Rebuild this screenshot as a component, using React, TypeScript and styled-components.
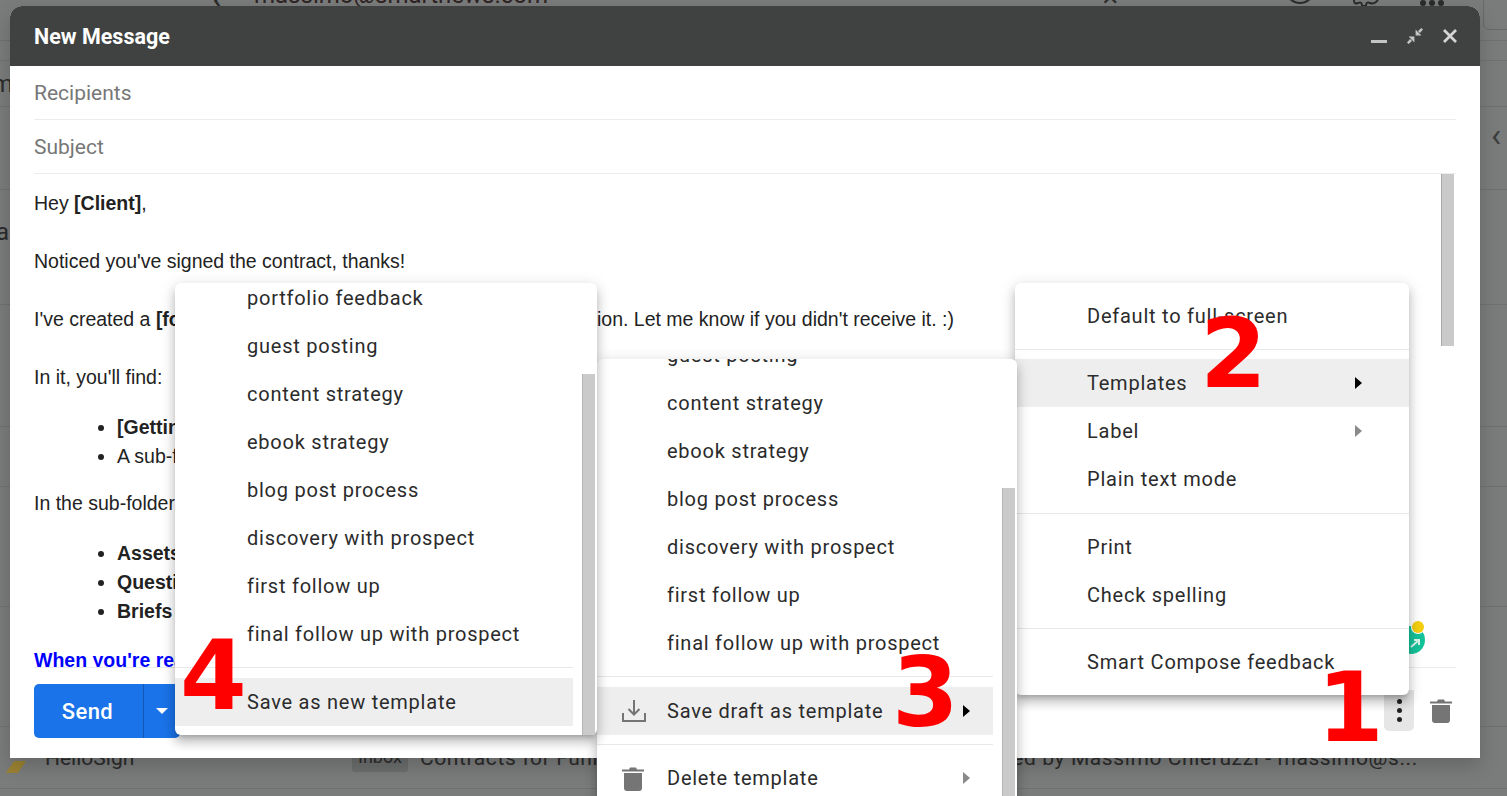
import React from "react";
import styled, { createGlobalStyle } from "styled-components";

const GlobalStyle = createGlobalStyle`
  html, body {
    margin: 0;
    padding: 0;
    height: 100%;
    overflow: hidden;
    background: #7a7c7b;
  }
  * {
    box-sizing: border-box;
  }
`;

const ROBOTO = `Roboto, "Liberation Sans", sans-serif`;
const ARIAL = `"Liberation Sans", Arial, sans-serif`;

function MinimizeIcon() {
    return (
        <svg width="16" height="4" viewBox="0 0 16 4">
            <rect x="0" y="0" width="16" height="3" fill="#c4c4c4" />
        </svg>
    );
}

function CompressIcon() {
    return (
        <svg width="16" height="16" viewBox="0 0 16 16" fill="#c4c4c4">
            <path d="M8.6 1.6 L14.4 7.4 H8.6 Z" />
            <path d="M11 3 L14.4 0 L16 1.6 L13 5 Z" />
            <path d="M7.4 14.4 L1.6 8.6 H7.4 Z" />
            <path d="M5 13 L1.6 16 L0 14.4 L3 11 Z" />
        </svg>
    );
}

function CloseIcon() {
    return (
        <svg width="14" height="14" viewBox="0 0 14 14" stroke="#d4d4d4" strokeWidth="2.8">
            <path d="M1 1 L13 13 M13 1 L1 13" />
        </svg>
    );
}

function TrashIcon() {
    return (
        <svg width="22" height="25" viewBox="0 0 22 25" fill="#757575">
            <path d="M0 3.5 H7 L8 1.5 H14 L15 3.5 H22 V5.5 H0 Z" />
            <path d="M2 7 H20 V22 Q20 25 17 25 H5 Q2 25 2 22 Z" />
        </svg>
    );
}

function SaveIcon() {
    return (
        <svg width="24" height="24" viewBox="0 0 24 24" fill="none" stroke="#757575" strokeWidth="2">
            <path d="M1 14 V22 H23 V14" />
            <path d="M12 1 V15 M6.5 10 L12 15.5 L17.5 10" />
        </svg>
    );
}

function MenuItem(props: { label: string; icon?: React.ReactNode; arrow?: "black" | "gray"; active?: boolean; gutter: number; arrowRight?: number }) {
    return (
        <Item $active={props.active} $gutter={props.gutter}>
            {props.icon && <ItemIcon>{props.icon}</ItemIcon>}
            {props.label}
            {props.arrow && <Arrow $right={props.arrowRight ?? 47} $color={props.arrow === "black" ? "#000" : "#8a8a8a"} />}
        </Item>
    );
}

const templatesA = [
    "portfolio feedback",
    "guest posting",
    "content strategy",
    "ebook strategy",
    "blog post process",
    "discovery with prospect",
    "first follow up",
    "final follow up with prospect",
];

const templatesB = [
    "guest posting",
    "content strategy",
    "ebook strategy",
    "blog post process",
    "discovery with prospect",
    "first follow up",
    "final follow up with prospect",
];

export default function App() {
    return (
        <>
            <GlobalStyle />
            <Page>
                <Backdrop>
                    <TopRow>
                        <TopLeft>mail</TopLeft>
                        <TopBack>‹</TopBack>
                        <TopMail>massimo@smartnews.com</TopMail>
                        <TopGlyph $x={1101}>✕</TopGlyph>
                        <TopCircle />
                        <TopWave width="26" height="7" viewBox="0 0 26 7" fill="none" stroke="#2b2b2b" strokeWidth="2">
                            <path d="M1 0 Q1 5 5 3 Q9 1 9 6 H13 Q13 1 17 3 Q21 5 25 0" />
                        </TopWave>
                        <TopDots><i /><i /><i /></TopDots>
                        <TopBox />
                    </TopRow>
                    <BackRow $h={20} />
                    <BackRow $h={46}><EdgeText>m</EdgeText></BackRow>
                    <BackRow $h={83}><SideChevron>‹</SideChevron></BackRow>
                    <BackRow $h={115}><EdgeLetter>a</EdgeLetter></BackRow>
                    <BackRow $h={122} />
                    <BackRow $h={60} />
                    <BackRow $h={120} />
                    <BackRow $h={120} />
                    <BackRow $h={62}>
                        <HelloRow>
                            <Tag />
                            <Sender>HelloSign</Sender>
                            <InboxBadge>Inbox</InboxBadge>
                            <Snippet>Contracts for Funnel Design Project for Brand has been signed by Massimo Chieruzzi - massimo@s...</Snippet>
                        </HelloRow>
                    </BackRow>
                </Backdrop>

                <Compose>
                    <ComposeHeader>
                        <Title>New Message</Title>
                        <HeaderIcons>
                            <MinimizeSlot><MinimizeIcon /></MinimizeSlot>
                            <CompressIcon />
                            <CloseIcon />
                        </HeaderIcons>
                    </ComposeHeader>
                    <Field>Recipients</Field>
                    <Field>Subject</Field>
                    <BodyRow>
                        <BodyText>
                            <Line>Hey <b>[Client]</b>,</Line>
                            <Line>&nbsp;</Line>
                            <Line>Noticed you've signed the contract, thanks!</Line>
                            <Line>&nbsp;</Line>
                            <Line>I've created a <b>[folder]</b> folder on Google Drive with all the information. Let me know if you didn't receive it. :)</Line>
                            <Line>&nbsp;</Line>
                            <Line>In it, you'll find:</Line>
                            <List>
                                <li><b>[Getting Started]</b></li>
                                <li>A sub-folder</li>
                            </List>
                            <Line>In the sub-folder you'll find:</Line>
                            <List>
                                <li><b>Assets</b></li>
                                <li><b>Questions</b></li>
                                <li><b>Briefs</b></li>
                            </List>
                            <BlueLine>When you're ready</BlueLine>
                        </BodyText>
                        <BodyScroll />
                    </BodyRow>
                    <Footer>
                        <SendButton>
                            <SendLabel>Send</SendLabel>
                            <SendCaret />
                        </SendButton>
                        <FooterIcons>
                            <Kebab><i /><i /><i /></Kebab>
                            <TrashIcon />
                        </FooterIcons>
                    </Footer>
                    <Grammarly>
                        <svg width="28" height="28" viewBox="0 0 28 28" fill="none" stroke="#d8f5ec" strokeWidth="2">
                            <path d="M14 21 L22 14 M17 14 H22 V19" />
                        </svg>
                        <GrammarlyDot />
                    </Grammarly>
                </Compose>

                <MenuC>
                    <MenuItem gutter={72} label="Default to full-screen" />
                    <Divider />
                    <MenuItem gutter={72} label="Templates" arrow="black" active />
                    <MenuItem gutter={72} label="Label" arrow="gray" />
                    <MenuItem gutter={72} label="Plain text mode" />
                    <Divider $before={10} />
                    <MenuItem gutter={72} label="Print" />
                    <MenuItem gutter={72} label="Check spelling" />
                    <Divider />
                    <MenuItem gutter={72} label="Smart Compose feedback" />
                </MenuC>

                <MenuB>
                    <Scrolled $offset={28}>
                        {templatesB.map((t) => <MenuItem key={t} gutter={70} label={t} />)}
                        <Divider $after={10} />
                        <MenuItem gutter={70} label="Save draft as template" icon={<SaveIcon />} arrow="black" arrowRight={23} active />
                        <Divider />
                        <MenuItem gutter={70} label="Delete template" icon={<TrashIcon />} arrow="gray" arrowRight={23} />
                    </Scrolled>
                    <MenuBThumb />
                </MenuB>

                <MenuA>
                    <Scrolled $offset={9}>
                        {templatesA.map((t) => <MenuItem key={t} gutter={72} label={t} />)}
                        <Divider $after={10} />
                        <MenuItem gutter={72} label="Save as new template" active />
                    </Scrolled>
                    <MenuAThumb />
                </MenuA>

                <Step $x={1317} $y={643}>1</Step>
                <Step $x={1200} $y={289}>2</Step>
                <Step $x={892} $y={628}>3</Step>
                <Step $x={180} $y={611}>4</Step>
            </Page>
        </>
    );
}

const Page = styled.div`
  position: relative;
  width: 100vw;
  height: 100vh;
  overflow: hidden;
  background: #7a7c7b;
`;

const Backdrop = styled.div`
  display: flex;
  flex-direction: column;
  color: #2b2b2b;
  font-family: ${ROBOTO};
  font-size: 20px;
`;

const TopRow = styled.div`
  height: 41px;
  flex: none;
  position: relative;
  overflow: hidden;
  border-bottom: 1px solid #6f7170;
`;

const TopLeft = styled.span`
  position: absolute;
  left: -1px;
  top: -24px;
  font-size: 26px;
`;

const TopBack = styled.span`
  position: absolute;
  left: 212px;
  top: -22px;
  font-size: 36px;
`;

const TopMail = styled.span`
  position: absolute;
  left: 254px;
  top: -19px;
  font-size: 24px;
  color: #2e2222;
`;

const TopGlyph = styled.span<{ $x: number }>`
  position: absolute;
  left: ${(p) => p.$x}px;
  top: -15px;
  font-size: 22px;
`;

const TopCircle = styled.span`
  position: absolute;
  left: 1285px;
  top: -26px;
  width: 30px;
  height: 30px;
  border: 2px solid #2b2b2b;
  border-radius: 50%;
`;

const TopWave = styled.svg`
  position: absolute;
  left: 1353px;
  top: 0;
`;

const TopDots = styled.span`
  position: absolute;
  left: 1420px;
  top: 0;
  display: flex;
  gap: 3px;

  i {
    width: 6px;
    height: 6px;
    border-radius: 50%;
    background: #2b2b2b;
  }
`;

const TopBox = styled.span`
  position: absolute;
  left: 1483px;
  top: -12px;
  width: 40px;
  height: 42px;
  border: 1px solid #686a69;
  border-radius: 6px;
`;

const BackRow = styled.div<{ $h: number }>`
  position: relative;
  height: ${(p) => p.$h}px;
  flex: none;
  border-bottom: 1px solid #6f7170;
  display: flex;
  align-items: center;
`;

const EdgeText = styled.span`
  margin-left: -8px;
  font-size: 24px;
`;

const EdgeLetter = styled(EdgeText)`
  margin-left: -4px;
  margin-top: -30px;
`;

const SideChevron = styled.span`
  position: absolute;
  left: 1491px;
  top: 8px;
  font-size: 34px;
  line-height: 40px;
  color: #3c3c3c;
`;

const HelloRow = styled.div`
  display: flex;
  align-items: center;
  padding-left: 10px;
  white-space: nowrap;
`;

const Tag = styled.span`
  width: 12px;
  height: 12px;
  margin: 18px 23px 0 0;
  background: #9a8232;
  transform: skewX(-35deg);
`;

const Sender = styled.span`
  width: 307px;
  font-size: 21px;
`;

const InboxBadge = styled.span`
  width: 56px;
  height: 28px;
  margin-right: 12px;
  border-radius: 3px;
  background: #6c6e6d;
  text-align: center;
  font-size: 18px;
  line-height: 26px;
`;

const Snippet = styled.span`
  font-size: 21px;
  letter-spacing: 0.6px;
`;

const Compose = styled.div`
  position: absolute;
  left: 10px;
  top: 6px;
  width: 1470px;
  height: 752px;
  display: flex;
  flex-direction: column;
  background: #fff;
  border-radius: 12px 12px 0 0;
  box-shadow: 0 8px 20px rgba(0, 0, 0, 0.18);
`;

const ComposeHeader = styled.div`
  height: 60px;
  flex: none;
  display: flex;
  align-items: center;
  justify-content: space-between;
  padding: 0 23px 0 24px;
  background: #404241;
  border-radius: 12px 12px 0 0;
`;

const Title = styled.div`
  font-family: ${ROBOTO};
  font-weight: 700;
  font-size: 21.5px;
  color: #fff;
`;

const HeaderIcons = styled.div`
  display: flex;
  align-items: center;
  gap: 20px;
`;

const MinimizeSlot = styled.div`
  display: flex;
  padding-top: 11px;
`;

const Field = styled.div`
  height: 54px;
  flex: none;
  margin: 0 24px;
  display: flex;
  align-items: center;
  border-bottom: 1px solid #ececec;
  font-family: ${ROBOTO};
  font-size: 21px;
  color: #777;
`;

const BodyRow = styled.div`
  flex: 1;
  min-height: 0;
  margin: 0 24px;
  display: flex;
  justify-content: space-between;
  overflow: hidden;
  border-bottom: 1px solid #ececec;
`;

const BodyText = styled.div`
  padding-top: 15px;
  font-family: ${ARIAL};
  font-size: 19.5px;
  line-height: 29px;
  color: #222;
  white-space: nowrap;
`;

const Line = styled.div``;

const List = styled.ul`
  margin: 21px 0 18px;
  padding-left: 83px;
`;

const BlueLine = styled.div`
  margin-top: 20px;
  color: #0000ff;
  font-weight: 700;
`;

const BodyScroll = styled.div`
  width: 13px;
  height: 172px;
  margin-right: 2px;
  background: #cacaca;
  border-left: 1px solid #a9a9a9;
`;

const Footer = styled.div`
  height: 90px;
  flex: none;
  display: flex;
  justify-content: space-between;
  padding: 16px 28px 0 24px;
`;

const SendButton = styled.div`
  width: 146px;
  height: 54px;
  display: flex;
  align-items: center;
  background: #1a73e8;
  border-radius: 5px;
`;

const SendLabel = styled.div`
  width: 110px;
  height: 100%;
  padding-right: 2px;
  display: flex;
  align-items: center;
  justify-content: center;
  border-right: 1px solid #1559b7;
  font-family: ${ROBOTO};
  font-weight: 500;
  font-size: 22px;
  letter-spacing: 0.4px;
  color: #fff;
`;

const SendCaret = styled.div`
  margin-left: 12px;
  width: 0;
  height: 0;
  border-left: 6px solid transparent;
  border-right: 6px solid transparent;
  border-top: 6px solid #fff;
`;

const FooterIcons = styled.div`
  display: flex;
  align-items: center;
  gap: 16px;
  height: 41px;
  margin-top: 6px;
`;

const Kebab = styled.div`
  width: 30px;
  height: 41px;
  display: flex;
  flex-direction: column;
  align-items: center;
  justify-content: flex-end;
  gap: 4px;
  padding-bottom: 9px;
  background: #e6e6e6;
  border-radius: 0 0 5px 5px;

  i {
    width: 5px;
    height: 5px;
    border-radius: 50%;
    background: #222;
  }
`;

const Grammarly = styled.div`
  position: absolute;
  left: 1387px;
  top: 620px;
  width: 28px;
  height: 28px;
  border-radius: 50%;
  background: #15c39a;
`;

const GrammarlyDot = styled.div`
  position: absolute;
  right: 1px;
  top: -5px;
  width: 12px;
  height: 12px;
  border-radius: 50%;
  background: #f5cf0f;
  box-shadow: 0 0 0 1px #fff;
`;

const Menu = styled.div`
  position: absolute;
  background: #fff;
  border-radius: 6px;
  overflow: hidden;
  box-shadow: 0 8px 10px 1px rgba(0, 0, 0, 0.14), 0 3px 14px 2px rgba(0, 0, 0, 0.12), 0 5px 5px -3px rgba(0, 0, 0, 0.2);
  font-family: ${ROBOTO};
  font-size: 20px;
  letter-spacing: 0.76px;
  color: #2b2b2b;
`;

const MenuC = styled(Menu)`
  left: 1015px;
  top: 283px;
  width: 394px;
  height: 412px;
  padding: 9px 0;
`;

const MenuB = styled(Menu)`
  left: 597px;
  top: 359px;
  width: 420px;
  height: 470px;
`;

const MenuA = styled(Menu)`
  left: 175px;
  top: 283px;
  width: 422px;
  height: 452px;
`;

const Scrolled = styled.div<{ $offset: number }>`
  margin-top: -${(p) => p.$offset}px;
  padding-right: 24px;
`;

const MenuThumb = styled.div`
  position: absolute;
  background: #cacaca;
  border-left: 1px solid #b5b5b5;
  width: 13px;
  bottom: 0;
`;

const MenuAThumb = styled(MenuThumb)`
  right: 2px;
  top: 91px;
`;

const MenuBThumb = styled(MenuThumb)`
  right: 2px;
  top: 129px;
`;

const Item = styled.div<{ $active?: boolean; $gutter: number }>`
  position: relative;
  height: 48px;
  display: flex;
  align-items: center;
  padding-left: ${(p) => p.$gutter}px;
  background: ${(p) => (p.$active ? "#eeeeee" : "transparent")};
  white-space: nowrap;
`;

const ItemIcon = styled.span`
  position: absolute;
  left: 25px;
  top: 12px;
  display: flex;
`;

const Arrow = styled.span<{ $color: string; $right: number }>`
  position: absolute;
  right: ${(p) => p.$right}px;
  top: 18px;
  width: 0;
  height: 0;
  border-top: 6px solid transparent;
  border-bottom: 6px solid transparent;
  border-left: 7px solid ${(p) => p.$color};
`;

const Divider = styled.div<{ $before?: number; $after?: number }>`
  height: 1px;
  margin: ${(p) => p.$before ?? 9}px 0 ${(p) => p.$after ?? 9}px;
  background: #e8e8e8;
`;

const Step = styled.div<{ $x: number; $y: number }>`
  position: absolute;
  left: ${(p) => p.$x}px;
  top: ${(p) => p.$y}px;
  font-family: "DejaVu Sans", sans-serif;
  font-weight: 700;
  font-size: 96px;
  line-height: 130px;
  color: #ff0000;
`;
